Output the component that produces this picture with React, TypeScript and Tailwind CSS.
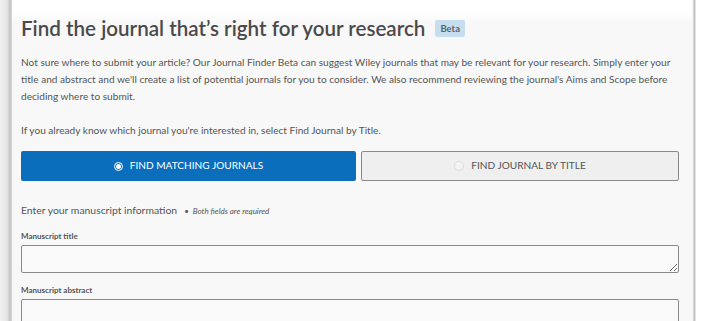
import React from 'react';

const font = { fontFamily: 'Lato, "Open Sans", sans-serif' };

export default function App() {
  return (
    <div className="flex h-[321px] w-[702px] overflow-hidden bg-white text-[#4d4d4d]" style={font}>
      {/* left page shadow */}
      <div className="w-[12px] shrink-0 bg-[linear-gradient(to_right,#f2f2f2_0,#e6e6e6_7px,#c4c4c4_10px,#d8d8d8_12px)]" />
      <main className="flex w-[680px] shrink-0 flex-col bg-[linear-gradient(to_bottom,#ffffff_0,#ffffff_12px,#f8f8f8_22px)] pl-[9px] pr-[11px]">
        <div className="mt-[15px] flex items-center gap-[10px]">
          <h1 className="text-[20.6px] font-semibold leading-[26px] text-[#4a4a4a]">
            Find the journal that’s right for your research
          </h1>
          <span className="rounded-[2px] bg-[#c6def0] px-[5px] py-[2px] text-[9.5px] font-bold leading-[13px] text-[#5a6570]">
            Beta
          </span>
        </div>

        <p className="mt-[13px] text-[10.1px] leading-[17px] text-[#555]">
          Not sure where to submit your article? Our Journal Finder Beta can suggest Wiley journals that may be relevant
          for your research. Simply enter your title and abstract and we'll create a list of potential journals for you
          to consider. We also recommend reviewing the journal's Aims and Scope before deciding where to submit.
        </p>
        <p className="mt-[17px] text-[10.1px] leading-[17px] text-[#555]">
          If you already know which journal you're interested in, select Find Journal by Title.
        </p>

        <div className="mt-[12px] flex gap-[5px]">
          <button
            type="button"
            className="flex h-[30px] w-[335px] items-center justify-center gap-[7px] rounded-[2px] bg-[#0b6ebd] text-[10.1px] text-white"
          >
            <span className="flex h-[9px] w-[9px] items-center justify-center rounded-full border border-white">
              <span className="h-[5px] w-[5px] rounded-full bg-white" />
            </span>
            FIND MATCHING JOURNALS
          </button>
          <button
            type="button"
            className="flex h-[30px] w-[318px] items-center justify-center gap-[7px] rounded-[2px] border border-[#8a8a8a] bg-[#efefef] text-[10.1px] text-[#555]"
          >
            <span className="h-[10px] w-[10px] rounded-full border border-[#dcdcdc] bg-[#f3f3f3]" />
            FIND JOURNAL BY TITLE
          </button>
        </div>

        <div className="mt-[22px] flex items-baseline">
          <span className="text-[10.4px] text-[#555]">Enter your manuscript information</span>
          <span className="ml-[7px] text-[8px] italic text-[#555]">•</span>
          <span className="ml-[4px] text-[8px] italic text-[#555]">Both fields are required</span>
        </div>

        <label className="mt-[12px] text-[8px] font-bold leading-[10px] text-[#555]">Manuscript title</label>
        <textarea className="mt-[4px] h-[28px] w-[658px] shrink-0 resize-y rounded-[2px] border border-[#8a8a8a] bg-[#f9f9f9]" />

        <label className="mt-[12px] text-[8px] font-bold leading-[10px] text-[#555]">Manuscript abstract</label>
        <textarea className="mt-[4px] h-[40px] w-[658px] shrink-0 resize-none rounded-[2px] border border-[#8a8a8a] bg-[#f9f9f9]" />
      </main>
      {/* right edge */}
      <div className="w-[10px] shrink-0 bg-[linear-gradient(to_right,#f6f6f6_0,#f6f6f6_1px,#b8b8b8_2px,#c8c8c8_3px,#ffffff_4px)]" />
    </div>
  );
}
